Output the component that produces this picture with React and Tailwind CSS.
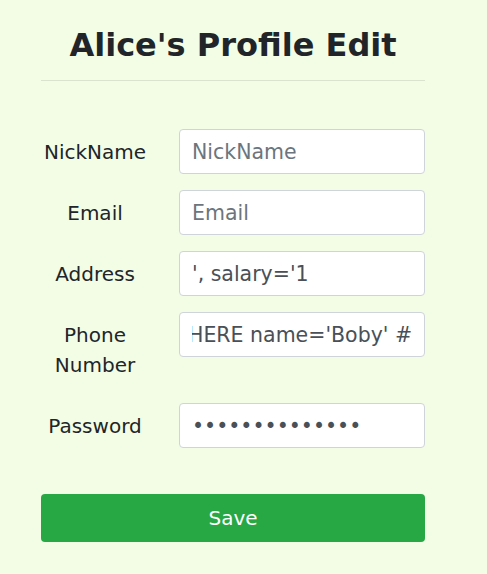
import { useEffect, useRef } from 'react';

const rows = [
  { label: 'NickName', placeholder: 'NickName' },
  { label: 'Email', placeholder: 'Email' },
  { label: 'Address', value: "', salary='1" },
  { label: 'Phone Number', value: "', salary='1' WHERE name='Boby' #", scrollEnd: true },
  { label: 'Password', value: '12345678901234', type: 'password' },
];

const Field = ({ label, placeholder, value, type = 'text', scrollEnd }) => {
  const ref = useRef(null);

  useEffect(() => {
    if (scrollEnd && ref.current) ref.current.scrollLeft = ref.current.scrollWidth;
  }, [scrollEnd]);

  return (
    <div className="flex items-start gap-[30px]">
      <label className="w-[108px] py-[7.5px] text-center text-[20px] leading-[30px] text-[#212529]">
        {label}
      </label>
      <input
        ref={ref}
        type={type}
        placeholder={placeholder}
        defaultValue={value}
        readOnly
        className="w-[246px] h-[45px] px-3 rounded-[4px] border border-[#ced4da] bg-white text-[20.5px] leading-[30px] text-[#495057] placeholder:text-[#6c757d] outline-none"
        style={{ fontFamily: '"DejaVu Sans", sans-serif' }}
      />
    </div>
  );
};

export default function App() {
  return (
    <div
      className="min-h-[574px] bg-[#f3fde6] pt-[26px]"
      style={{ fontFamily: '"DejaVu Sans", sans-serif' }}
    >
      <div className="ml-[41px] w-[384px]">
        <h2 className="text-center text-[32px] font-bold leading-[1.2] text-[#212529]">
          Alice's Profile Edit
        </h2>
        <hr className="mt-[16px] border-0 border-t border-black/10" />

        <form className="mt-[48px] flex flex-col gap-4" onSubmit={(e) => e.preventDefault()}>
          {rows.map((r) => (
            <Field key={r.label} {...r} />
          ))}
          <button
            type="submit"
            className="mt-[30px] h-[48px] w-full rounded-[4px] bg-[#28a745] text-[20px] text-white"
          >
            Save
          </button>
        </form>
      </div>
    </div>
  );
}
